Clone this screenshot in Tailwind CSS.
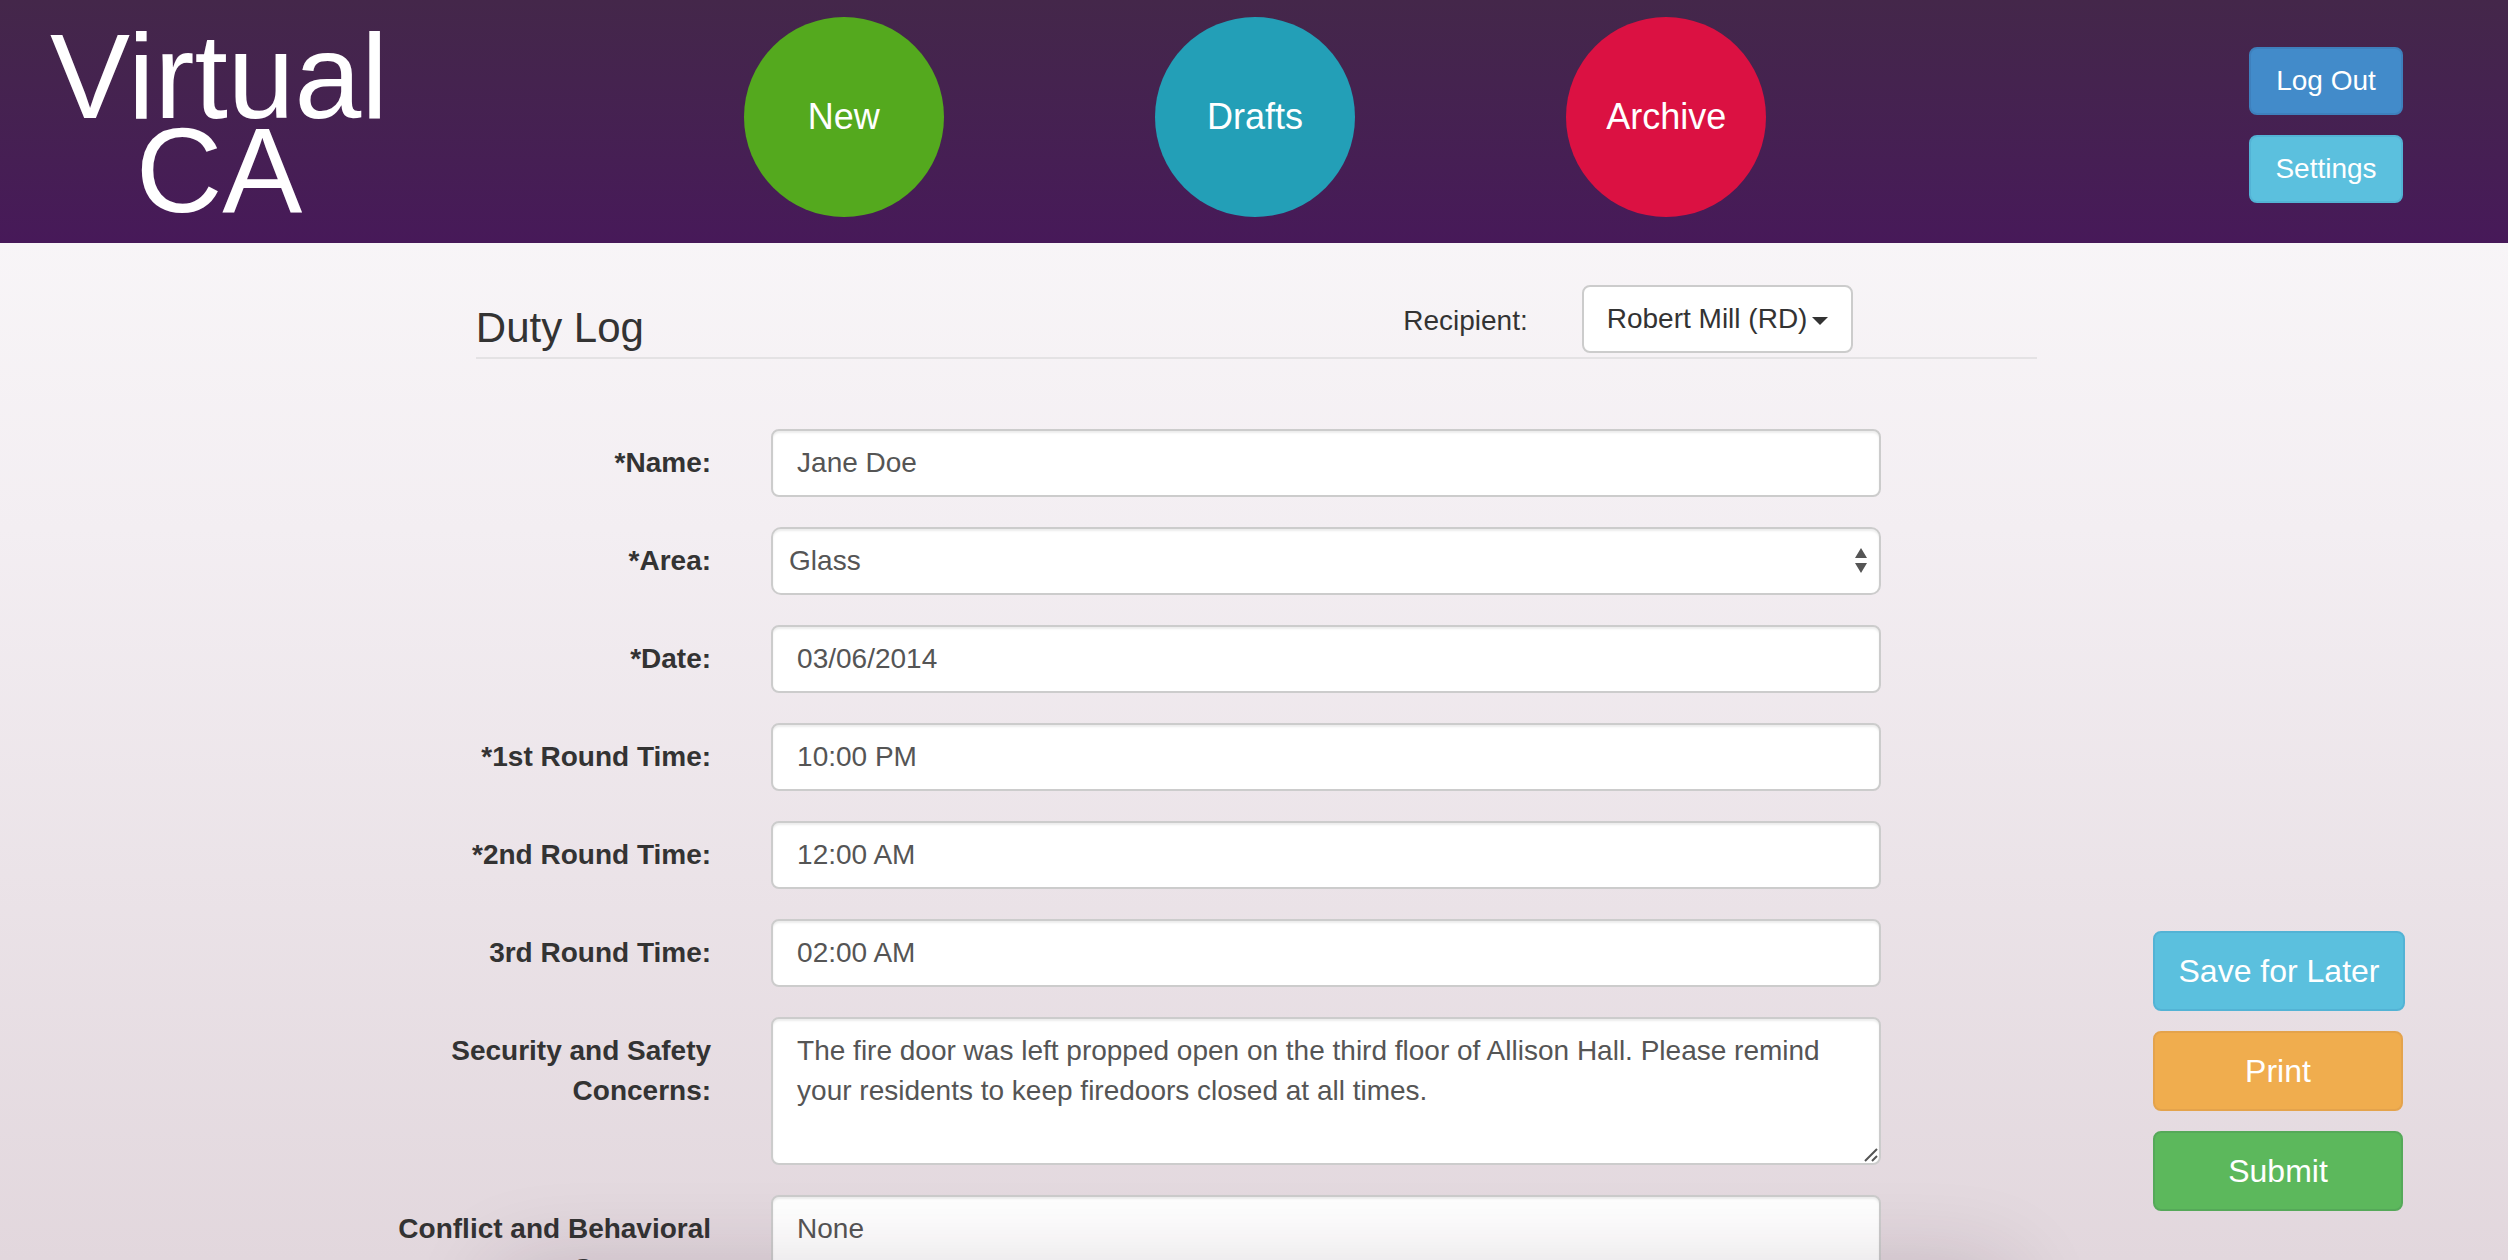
<!DOCTYPE html>
<html lang="en">
<head>
<meta charset="utf-8">
<title>Virtual CA</title>
<script src="https://cdn.jsdelivr.net/npm/@tailwindcss/browser@4"></script>
</head>
<body class="flex h-screen flex-col overflow-hidden bg-linear-to-b from-[#fcfbfc] via-[#f3eef2] via-42% to-[#e2d7dd] font-['Liberation_Sans',Arial,sans-serif] text-[28px] leading-[40px] text-[#333]">

<header class="flex h-[243px] shrink-0 items-start bg-linear-to-b from-[#44274a] to-[#471959] text-white">
  <h1 class="w-[438px] pt-[29px] text-center text-[120px] leading-[94px]">Virtual<br>CA</h1>
  <nav class="mx-auto grid w-[49.2%] grid-cols-3 justify-items-center pt-[17px] text-[36px]">
    <a href="#new" class="flex size-[200px] items-center justify-center rounded-full bg-[#54a91e]">New</a>
    <a href="#drafts" class="flex size-[200px] items-center justify-center rounded-full bg-[#239fb7]">Drafts</a>
    <a href="#archive" class="flex size-[200px] items-center justify-center rounded-full bg-[#db1142]">Archive</a>
  </nav>
  <div class="flex w-[436px] flex-col items-end gap-5 pt-[47px] pr-[105px]">
    <button type="button" class="h-[68px] w-[154px] rounded-lg border-2 border-[#3e80bd] bg-[#428bca]">Log Out</button>
    <button type="button" class="h-[68px] w-[154px] rounded-lg border-2 border-[#53b3d5] bg-[#5bc0de]">Settings</button>
  </div>
</header>

<main class="flex min-h-0 flex-1">
  <form id="duty-log" class="min-w-0 flex-1 overflow-y-auto [scrollbar-width:none]">
    <div class="pt-[42px] pr-[5.4%] pl-[22.1%]">
      <div class="flex items-end border-b-2 border-[#e4e2e4] pr-[184px] pb-1">
        <h2 class="flex-1 text-[42px] leading-[50px]">Duty Log</h2>
        <div class="flex items-center gap-[54px]">
          <label for="recipient" class="pt-1">Recipient:</label>
          <div class="relative">
            <select id="recipient" class="block h-[68px] w-[271px] appearance-none rounded-lg border-2 border-[#ccc] bg-white pl-[23px]">
              <option>Robert Mill (RD)</option>
            </select>
            <svg class="pointer-events-none absolute top-[32px] right-[25px] h-2 w-4" viewBox="0 0 16 8" fill="#333"><path d="M0 0h16l-8 8z"/></svg>
          </div>
        </div>
      </div>
    </div>

    <div class="flex flex-col gap-[30px] pt-[70px] pr-[12.65%] pl-[17.7%] text-[#555]">
      <div class="flex gap-[60px]">
        <label for="name" class="w-[330px] pt-[14px] text-right font-bold text-[#333]">*Name:</label>
        <input id="name" type="text" value="Jane Doe" class="h-[68px] min-w-0 flex-1 rounded-lg border-2 border-[#ccc] bg-white px-6 shadow-[inset_0_2px_2px_rgba(0,0,0,0.075)]">
      </div>
      <div class="flex gap-[60px]">
        <label for="area" class="w-[330px] pt-[14px] text-right font-bold text-[#333]">*Area:</label>
        <div class="relative min-w-0 flex-1">
          <select id="area" class="block h-[68px] w-full appearance-none rounded-[10px] border-2 border-[#ccc] bg-white px-4 shadow-[inset_0_2px_2px_rgba(0,0,0,0.075)]">
            <option>Glass</option>
          </select>
          <svg class="pointer-events-none absolute top-[21px] right-[13px] h-[26px] w-[14px]" viewBox="0 0 14 26" fill="#555"><path d="M7 0l6 10H1zM1 15h12L7 25z"/></svg>
        </div>
      </div>
      <div class="flex gap-[60px]">
        <label for="date" class="w-[330px] pt-[14px] text-right font-bold text-[#333]">*Date:</label>
        <input id="date" type="text" value="03/06/2014" class="h-[68px] min-w-0 flex-1 rounded-lg border-2 border-[#ccc] bg-white px-6 shadow-[inset_0_2px_2px_rgba(0,0,0,0.075)]">
      </div>
      <div class="flex gap-[60px]">
        <label for="round1" class="w-[330px] pt-[14px] text-right font-bold text-[#333]">*1st Round Time:</label>
        <input id="round1" type="text" value="10:00 PM" class="h-[68px] min-w-0 flex-1 rounded-lg border-2 border-[#ccc] bg-white px-6 shadow-[inset_0_2px_2px_rgba(0,0,0,0.075)]">
      </div>
      <div class="flex gap-[60px]">
        <label for="round2" class="w-[330px] pt-[14px] text-right font-bold text-[#333]">*2nd Round Time:</label>
        <input id="round2" type="text" value="12:00 AM" class="h-[68px] min-w-0 flex-1 rounded-lg border-2 border-[#ccc] bg-white px-6 shadow-[inset_0_2px_2px_rgba(0,0,0,0.075)]">
      </div>
      <div class="flex gap-[60px]">
        <label for="round3" class="w-[330px] pt-[14px] text-right font-bold text-[#333]">3rd Round Time:</label>
        <input id="round3" type="text" value="02:00 AM" class="h-[68px] min-w-0 flex-1 rounded-lg border-2 border-[#ccc] bg-white px-6 shadow-[inset_0_2px_2px_rgba(0,0,0,0.075)]">
      </div>
      <div class="flex gap-[60px]">
        <label for="security" class="w-[330px] pt-[14px] text-right font-bold text-[#333]">Security and Safety Concerns:</label>
        <div class="relative min-w-0 flex-1">
          <textarea id="security" rows="3" class="block w-full resize-none rounded-lg border-2 border-[#ccc] bg-white px-6 py-3 shadow-[inset_0_2px_2px_rgba(0,0,0,0.075)]">The fire door was left propped open on the third floor of Allison Hall. Please remind your residents to keep firedoors closed at all times.</textarea>
          <svg class="pointer-events-none absolute right-[3px] bottom-[3px] size-[14px]" viewBox="0 0 14 14" fill="none" stroke="#555" stroke-width="2"><path d="M1 13L13 1M8 13l5-5"/></svg>
        </div>
      </div>
      <div class="flex gap-[60px]">
        <label for="conflict" class="w-[330px] pt-[14px] text-right font-bold text-[#333]">Conflict and Behavioral Concerns:</label>
        <textarea id="conflict" rows="3" class="block min-w-0 flex-1 resize-none rounded-lg border-2 border-[#ccc] bg-white px-6 py-3 shadow-[inset_0_2px_2px_rgba(0,0,0,0.075)]">None</textarea>
      </div>
    </div>
  </form>

  <aside class="flex w-[355px] shrink-0 flex-col justify-end gap-5 pb-[49px] text-[32px] text-white">
    <button type="button" class="h-20 w-[252px] rounded-lg border-2 border-[#53b3d5] bg-[#5bc0de]">Save for Later</button>
    <button type="button" class="h-20 w-[250px] rounded-lg border-2 border-[#e4a34c] bg-[#f0ad4e]">Print</button>
    <button type="submit" form="duty-log" class="h-20 w-[250px] rounded-lg border-2 border-[#55a959] bg-[#5cb85c]">Submit</button>
  </aside>
</main>

<!-- soft shade rising from the bottom edge -->
<div class="pointer-events-none fixed inset-x-[20%] -bottom-[120px] h-[110px] shadow-[0_0_90px_rgba(50,20,40,0.19)]"></div>
</body>
</html>
